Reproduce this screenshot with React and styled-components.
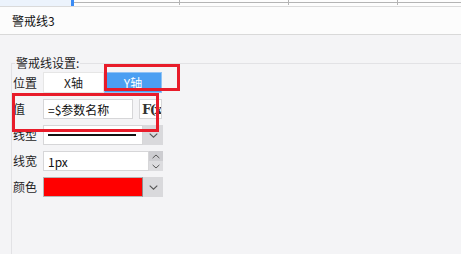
import React from "react";
import styled, { createGlobalStyle } from "styled-components";

const Global = createGlobalStyle`
  html, body { margin: 0; padding: 0; background: #f4f4f6; }
  body { font-family: "Noto Sans CJK SC", "Noto Sans", sans-serif; }
`;

const Page = styled.div`
  position: relative;
  width: 461px;
  height: 254px;
  overflow: hidden;
  display: flex;
  flex-direction: column;
  background: #f4f4f6;
  font-size: 12px;
  color: #1e1e1e;
`;

const TopStrip = styled.div`
  display: flex;
  height: 6px;
  border-bottom: 1px solid #dadada;
  background: #fdfdfd;
`;

const TabArea = styled.div`
  width: 71px;
  background: #ecf3fc;
`;

const TabMark = styled.div`
  width: 3px;
  background: #3b8cf5;
`;

const RulerCell = styled.div`
  width: ${(p) => p.$w}px;
  flex: ${(p) => (p.$w ? "none" : 1)};
  height: 5px;
  border-left: ${(p) => (p.$tick ? "1px solid #b4b4b4" : "none")};
  background: linear-gradient(#b4b4b4, #b4b4b4) 0 2px / 100% 1px no-repeat;
`;

const Header = styled.div`
  height: 27px;
  display: flex;
  align-items: center;
  padding-left: 12px;
  background: #fcfcfc;
  border-bottom: 1px solid #d9d9d9;
  font-size: 12px;
  color: #111;
`;

const Body = styled.div`
  flex: 1;
  display: flex;
  padding: 21px 0 0 11px;
`;

const Fieldset = styled.fieldset`
  flex: 1;
  margin: 0;
  padding: 2px 0 0 1px;
  border: 1px solid #e2e2e5;
  border-right: none;
  border-bottom: none;
  min-width: 0;
`;

const Legend = styled.legend`
  margin-left: 2px;
  padding: 0 1px;
  font-size: 12px;
  line-height: 14px;
  color: #1e1e1e;
`;

const Form = styled.div`
  display: grid;
  grid-template-columns: 30px max-content;
  grid-template-rows: 21px 20px 20px 20px 20px;
  row-gap: 6px;
  align-items: center;
`;

const Label = styled.div`
  font-size: 12px;
  line-height: 14px;
  color: #1e1e1e;
`;

const Controls = styled.div`
  display: flex;
  height: 100%;
  align-items: stretch;
  gap: ${(p) => p.$gap || 0}px;
`;

const SegButton = styled.div`
  width: ${(p) => p.$w}px;
  box-sizing: border-box;
  display: flex;
  align-items: center;
  justify-content: center;
  font-size: 12px;
  background: ${(p) => (p.$active ? "#4b9ff2" : "#ffffff")};
  color: ${(p) => (p.$active ? "#ffffff" : "#222")};
  border: 1px solid ${(p) => (p.$active ? "#8fc2f5" : "#e6e6e6")};
`;

const TextInput = styled.div`
  width: ${(p) => p.$w}px;
  box-sizing: border-box;
  background: #fff;
  border: 1px solid #d6d6d8;
  display: flex;
  align-items: center;
  padding-left: 4px;
  font-size: 12px;
  color: #111;
`;

const FxButton = styled.div`
  width: 23px;
  box-sizing: border-box;
  border: 1px solid #d6d6d8;
  background: #fff;
  overflow: hidden;
  white-space: nowrap;
  padding-left: 2px;
  display: flex;
  align-items: center;
  font-family: "DejaVu Serif", "Liberation Serif", serif;
  font-weight: bold;
  font-size: 13px;
  letter-spacing: -1.5px;
  color: #333;
`;

const SelectBox = styled.div`
  width: 100px;
  box-sizing: border-box;
  background: #fff;
  border: 1px solid #d6d6d8;
  display: flex;
  align-items: center;
  padding: 0 6px 0 4px;
`;

const LineSample = styled.div`
  flex: 1;
  height: 2px;
  background: #111;
`;

const Swatch = styled.div`
  width: 100px;
  box-sizing: border-box;
  background: #ff0000;
  border: 1px solid #b5b5b5;
  border-right-color: #8c8c8c;
`;

const DropButton = styled.div`
  width: 20px;
  background: #d9d9dc;
  display: flex;
  align-items: center;
  justify-content: center;
`;

const Spinner = styled.div`
  width: 14px;
  display: flex;
  flex-direction: column;
  background: #dcdcdf;
`;

const SpinHalf = styled.div`
  flex: 1;
  display: flex;
  align-items: center;
  justify-content: center;
  background: ${(p) => (p.$dark ? "#cdcdd1" : "transparent")};
`;

const Mark = styled.div`
  position: absolute;
  left: ${(p) => p.$x}px;
  top: ${(p) => p.$y}px;
  width: ${(p) => p.$w}px;
  height: ${(p) => p.$h}px;
  box-sizing: border-box;
  border: 3px solid #e81c2a;
  pointer-events: none;
`;

const ChevronDown = ({ w = 9 }) => (
  <svg width={w} height="5" viewBox="0 0 9 5">
    <path d="M0.7 0.7 L4.5 4.2 L8.3 0.7" fill="none" stroke="#555" strokeWidth="1.1" />
  </svg>
);

const ChevronUp = ({ w = 9 }) => (
  <svg width={w} height="5" viewBox="0 0 9 5">
    <path d="M0.7 4.3 L4.5 0.8 L8.3 4.3" fill="none" stroke="#555" strokeWidth="1.1" />
  </svg>
);

export default function App() {
  return (
    <>
      <Global />
      <Page>
        <TopStrip>
          <TabArea />
          <TabMark />
          <RulerCell $w={105} />
          <RulerCell $w={108} $tick />
          <RulerCell $w={108} $tick />
          <RulerCell $tick />
        </TopStrip>
        <Header>警戒线3</Header>
        <Body>
          <Fieldset>
            <Legend>警戒线设置:</Legend>
            <Form>
              <Label>位置</Label>
              <Controls>
                <SegButton $w={61}>X轴</SegButton>
                <SegButton $w={58} $active>Y轴</SegButton>
              </Controls>

              <Label>值</Label>
              <Controls $gap={6}>
                <TextInput $w={90}>=$参数名称</TextInput>
                <FxButton>F(x)</FxButton>
              </Controls>

              <Label>线型</Label>
              <Controls>
                <SelectBox>
                  <LineSample />
                </SelectBox>
                <DropButton>
                  <ChevronDown />
                </DropButton>
              </Controls>

              <Label>线宽</Label>
              <Controls>
                <TextInput $w={106}>1px</TextInput>
                <Spinner>
                  <SpinHalf $dark>
                    <ChevronUp w={8} />
                  </SpinHalf>
                  <SpinHalf>
                    <ChevronDown w={8} />
                  </SpinHalf>
                </Spinner>
              </Controls>

              <Label>颜色</Label>
              <Controls>
                <Swatch />
                <DropButton>
                  <ChevronDown />
                </DropButton>
              </Controls>
            </Form>
          </Fieldset>
        </Body>
        <Mark $x={104} $y={64} $w={76} $h={27} />
        <Mark $x={12} $y={93} $w={147} $h={39} />
      </Page>
    </>
  );
}
